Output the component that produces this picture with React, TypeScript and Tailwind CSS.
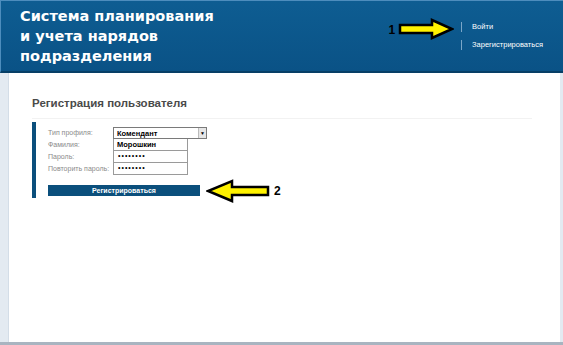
import React from "react";

const ArrowRight = () => (
  <svg width="56" height="22" viewBox="0 0 56 22">
    <polygon
      points="2,7 34,7 34,2 54,11 34,20 34,15 2,15"
      fill="#fff200"
      stroke="#000"
      strokeWidth="2.5"
      strokeLinejoin="miter"
    />
  </svg>
);

const ArrowLeft = () => (
  <svg width="64" height="24" viewBox="0 0 64 24">
    <polygon
      points="62,8 26,8 26,2 2,12 26,22 26,16 62,16"
      fill="#fff200"
      stroke="#000"
      strokeWidth="2.5"
      strokeLinejoin="miter"
    />
  </svg>
);

const App = () => {
  return (
    <div className="w-[563px] h-[345px] flex flex-col bg-[#e3eaf1] overflow-hidden font-['Liberation_Sans',Arial,sans-serif]">
      <div className="h-[73px] shrink-0 flex justify-between bg-gradient-to-b from-[#0e5d92] to-[#0a5286] border-t border-l border-[#4d8dbd] border-b-2 border-b-[#073f66]">
        <div className="pl-[19px] pt-[5px] text-white font-bold text-[14.5px] leading-[20px] font-['DejaVu_Sans',sans-serif]">
          <div>Система планирования</div>
          <div>и учета нарядов</div>
          <div>подразделения</div>
        </div>
        <div className="flex items-start pt-[17px] pr-[20px]">
          <div className="flex items-center">
            <span className="text-[12px] font-bold text-black mr-[3px] mt-[1px]">1</span>
            <ArrowRight />
          </div>
          <div className="ml-[7px] mt-[4px] flex flex-col gap-[8px] text-[7.5px] text-white">
            <div className="border-l border-[#7aa6c8] pl-[10px] h-[10px] leading-[10px]">Войти</div>
            <div className="border-l border-[#7aa6c8] pl-[10px] h-[10px] leading-[10px]">Зарегистрироваться</div>
          </div>
        </div>
      </div>
      <div className="flex-1 ml-[8px] mr-[3px] bg-white border-l border-[#d3dde7] pt-[22px] pl-[23px]">
        <div className="text-[11.5px] font-bold text-[#4a4a4a] pb-[6px] w-[500px] border-b border-[#f2f2f2]">
          Регистрация пользователя
        </div>
        <div className="mt-[3px] border-l-4 border-[#0b4f7c] pl-[12px] pt-[5px] pb-[2px] w-fit">
          <div className="grid grid-cols-[65px_auto] text-[7px] text-[#8a8a8a] items-center">
            <div className="h-[12px] leading-[12px]">Тип профиля:</div>
            <div className="h-[12px] w-[94px] border border-[#7a7a7a] bg-white flex items-center justify-between pl-[3px]">
              <span className="text-[7.5px] font-bold text-black">Комендант</span>
              <span className="w-[8px] h-[10px] bg-[#e6e6e6] border-l border-[#bbb] flex items-center justify-center text-[5px] text-black">▼</span>
            </div>
            <div className="h-[12px] leading-[12px]">Фамилия:</div>
            <div className="h-[12px] w-[75px] border border-[#9a9a9a] border-t-0 bg-white pl-[3px] text-[7.5px] font-bold text-black leading-[11px]">Морошкин</div>
            <div className="h-[12px] leading-[12px]">Пароль:</div>
            <div className="h-[12px] w-[75px] border border-[#9a9a9a] border-t-0 bg-white pl-[4px] text-[7px] text-black leading-[10px] tracking-[1px]">••••••••</div>
            <div className="h-[12px] leading-[12px]">Повторить пароль:</div>
            <div className="h-[12px] w-[75px] border border-[#9a9a9a] border-t-0 bg-white pl-[4px] text-[7px] text-black leading-[10px] tracking-[1px]">••••••••</div>
          </div>
          <div className="flex items-center mt-[10px]">
            <div className="w-[152px] h-[11px] bg-[#0b4f7c] text-white text-[7px] font-bold flex items-center justify-center">
              Регистрироваться
            </div>
            <div className="ml-[6px] -my-[7px] h-[24px]">
              <ArrowLeft />
            </div>
            <span className="ml-[4px] -my-[4px] text-[12px] font-bold text-black leading-[14px]">2</span>
          </div>
        </div>
      </div>
      <div className="h-[3px] shrink-0 bg-[#a9b4c0]" />
    </div>
  );
};

export default App;
